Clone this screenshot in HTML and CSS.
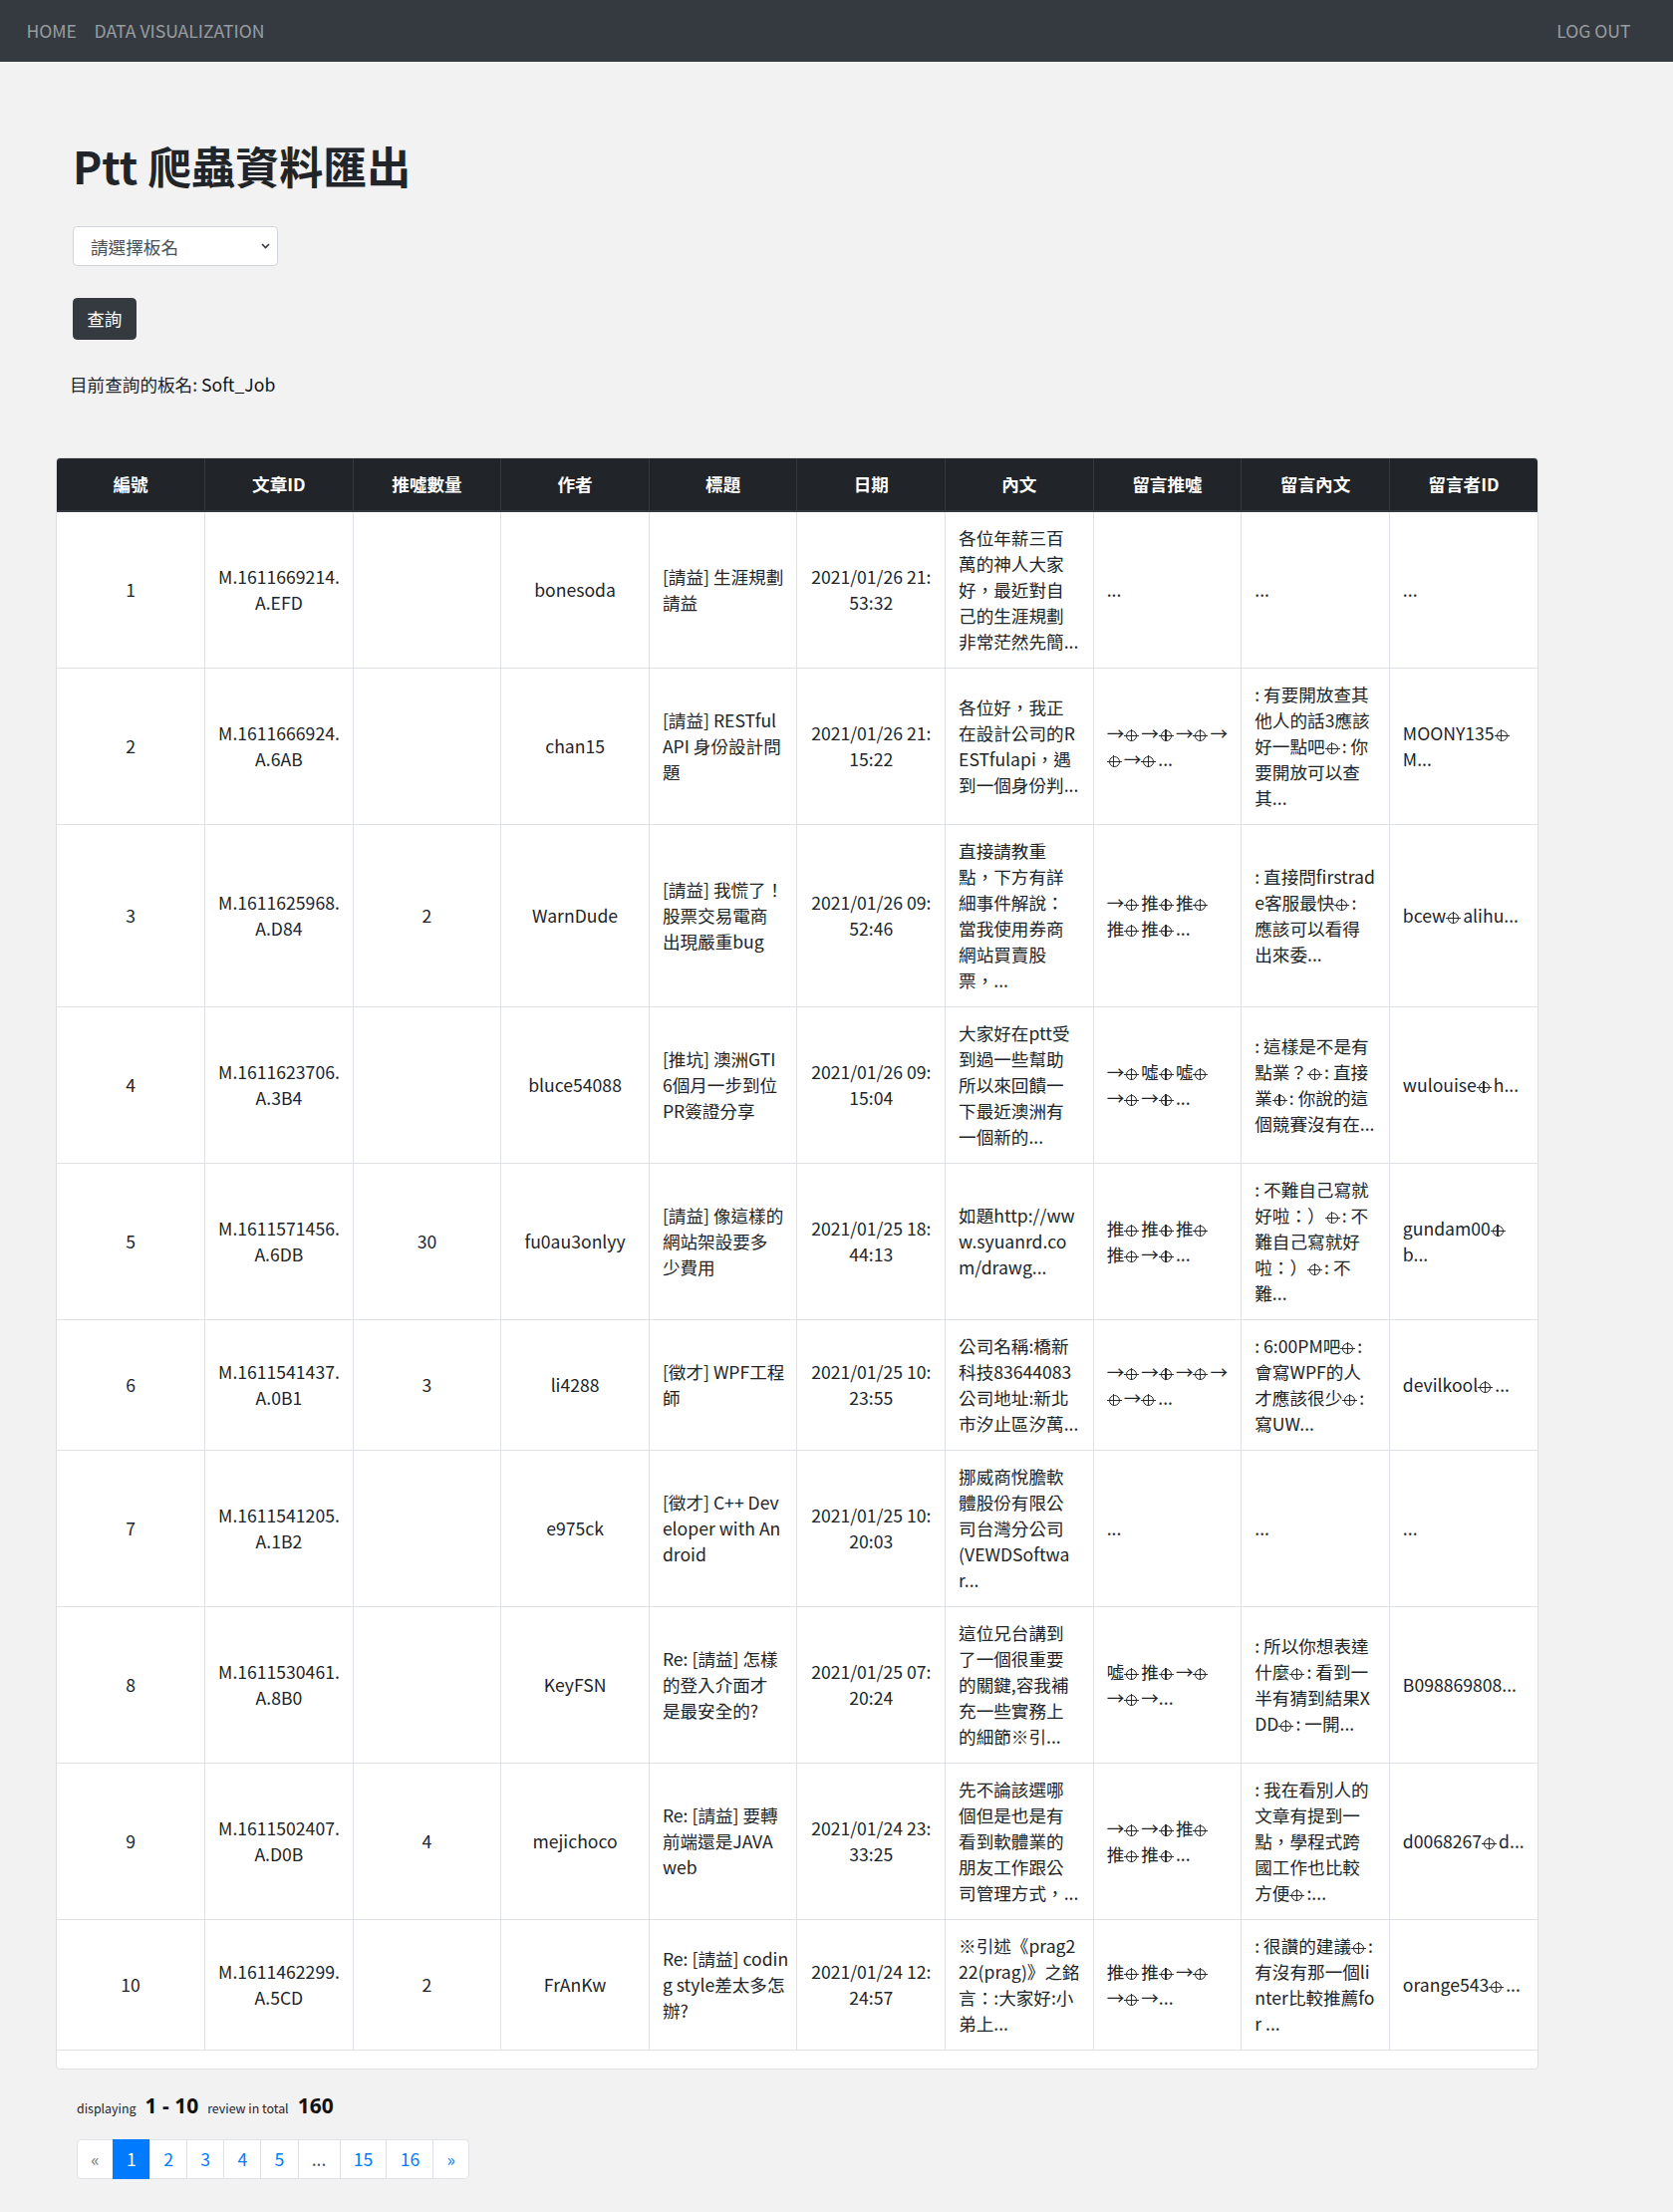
FILE: index.html
```html
<!DOCTYPE html>
<html lang="zh-Hant">
<head>
<meta charset="utf-8">
<title>Ptt 爬蟲資料匯出</title>
<link rel="stylesheet" href="styles.css">
</head>
<body>
<nav class="navbar">
  <div class="nav-left">
    <a class="nav-link" href="#">HOME</a>
    <a class="nav-link" href="#">DATA VISUALIZATION</a>
  </div>
  <div class="nav-right">
    <a class="nav-link" href="#">LOG OUT</a>
  </div>
</nav>

<main class="page">
  <section class="intro">
    <h1 class="title">Ptt 爬蟲資料匯出</h1>
    <div class="select-wrap">
      <select class="board-select">
        <option>請選擇板名</option>
      </select>
      <svg class="chev" width="9" height="6" viewBox="0 0 9 6"><polyline points="1,1 4.5,4.5 8,1" fill="none" stroke="#343a40" stroke-width="1.6"/></svg>
    </div>
    <button class="btn-query" type="button">查詢</button>
    <p class="current">目前查詢的板名: <span class="board">Soft_Job</span></p>
  </section>

  <div class="card">
    <table class="data-table">
      <thead>
        <tr>
          <th>編號</th><th>文章ID</th><th>推噓數量</th><th>作者</th><th>標題</th><th>日期</th><th>內文</th><th>留言推噓</th><th>留言內文</th><th>留言者ID</th>
        </tr>
      </thead>
      <tbody>
        <tr>
          <td class="c">1</td>
          <td class="c">M.1611669214.<br>A.EFD</td>
          <td class="c"></td>
          <td class="c">bonesoda</td>
          <td>[請益] 生涯規劃<br>請益</td>
          <td class="c">2021/01/26 21:<br>53:32</td>
          <td>各位年薪三百<br>萬的神人大家<br>好，最近對自<br>己的生涯規劃<br>非常茫然先簡...</td>
          <td>...</td>
          <td>...</td>
          <td>...</td>
        </tr>
        <tr>
          <td class="c">2</td>
          <td class="c">M.1611666924.<br>A.6AB</td>
          <td class="c"></td>
          <td class="c">chan15</td>
          <td>[請益] RESTful<br>API 身份設計問<br>題</td>
          <td class="c">2021/01/26 21:<br>15:22</td>
          <td>各位好，我正<br>在設計公司的R<br>ESTfulapi，遇<br>到一個身份判...</td>
          <td>→<span class="g"></span>→<span class="g"></span>→<span class="g"></span>→<br><span class="g"></span>→<span class="g"></span>...</td>
          <td>: 有要開放查其<br>他人的話3應該<br>好一點吧<span class="g"></span>: 你<br>要開放可以查<br>其...</td>
          <td>MOONY135<span class="g"></span><br>M...</td>
        </tr>
        <tr>
          <td class="c">3</td>
          <td class="c">M.1611625968.<br>A.D84</td>
          <td class="c">2</td>
          <td class="c">WarnDude</td>
          <td>[請益] 我慌了！<br>股票交易電商<br>出現嚴重bug</td>
          <td class="c">2021/01/26 09:<br>52:46</td>
          <td>直接請教重<br>點，下方有詳<br>細事件解說：<br>當我使用券商<br>網站買賣股<br>票，...</td>
          <td>→<span class="g"></span>推<span class="g"></span>推<span class="g"></span><br>推<span class="g"></span>推<span class="g"></span>...</td>
          <td>: 直接問firstrad<br>e客服最快<span class="g"></span>:<br>應該可以看得<br>出來委...</td>
          <td>bcew<span class="g"></span>alihu...</td>
        </tr>
        <tr>
          <td class="c">4</td>
          <td class="c">M.1611623706.<br>A.3B4</td>
          <td class="c"></td>
          <td class="c">bluce54088</td>
          <td>[推坑] 澳洲GTI<br>6個月一步到位<br>PR簽證分享</td>
          <td class="c">2021/01/26 09:<br>15:04</td>
          <td>大家好在ptt受<br>到過一些幫助<br>所以來回饋一<br>下最近澳洲有<br>一個新的...</td>
          <td>→<span class="g"></span>噓<span class="g"></span>噓<span class="g"></span><br>→<span class="g"></span>→<span class="g"></span>...</td>
          <td>: 這樣是不是有<br>點業？<span class="g"></span>: 直接<br>業<span class="g"></span>: 你說的這<br>個競賽沒有在...</td>
          <td>wulouise<span class="g"></span>h...</td>
        </tr>
        <tr>
          <td class="c">5</td>
          <td class="c">M.1611571456.<br>A.6DB</td>
          <td class="c">30</td>
          <td class="c">fu0au3onlyy</td>
          <td>[請益] 像這樣的<br>網站架設要多<br>少費用</td>
          <td class="c">2021/01/25 18:<br>44:13</td>
          <td>如題http://ww<br>w.syuanrd.co<br>m/drawg...</td>
          <td>推<span class="g"></span>推<span class="g"></span>推<span class="g"></span><br>推<span class="g"></span>→<span class="g"></span>...</td>
          <td>: 不難自己寫就<br>好啦：）<span class="g"></span>: 不<br>難自己寫就好<br>啦：）<span class="g"></span>: 不<br>難...</td>
          <td>gundam00<span class="g"></span><br>b...</td>
        </tr>
        <tr>
          <td class="c">6</td>
          <td class="c">M.1611541437.<br>A.0B1</td>
          <td class="c">3</td>
          <td class="c">li4288</td>
          <td>[徵才] WPF工程<br>師</td>
          <td class="c">2021/01/25 10:<br>23:55</td>
          <td>公司名稱:橋新<br>科技83644083<br>公司地址:新北<br>市汐止區汐萬...</td>
          <td>→<span class="g"></span>→<span class="g"></span>→<span class="g"></span>→<br><span class="g"></span>→<span class="g"></span>...</td>
          <td>: 6:00PM吧<span class="g"></span>:<br>會寫WPF的人<br>才應該很少<span class="g"></span>:<br>寫UW...</td>
          <td>devilkool<span class="g"></span>...</td>
        </tr>
        <tr>
          <td class="c">7</td>
          <td class="c">M.1611541205.<br>A.1B2</td>
          <td class="c"></td>
          <td class="c">e975ck</td>
          <td>[徵才] C++ Dev<br>eloper with An<br>droid</td>
          <td class="c">2021/01/25 10:<br>20:03</td>
          <td>挪威商悅膽軟<br>體股份有限公<br>司台灣分公司<br>(VEWDSoftwa<br>r...</td>
          <td>...</td>
          <td>...</td>
          <td>...</td>
        </tr>
        <tr>
          <td class="c">8</td>
          <td class="c">M.1611530461.<br>A.8B0</td>
          <td class="c"></td>
          <td class="c">KeyFSN</td>
          <td>Re: [請益] 怎樣<br>的登入介面才<br>是最安全的?</td>
          <td class="c">2021/01/25 07:<br>20:24</td>
          <td>這位兄台講到<br>了一個很重要<br>的關鍵,容我補<br>充一些實務上<br>的細節※引...</td>
          <td>噓<span class="g"></span>推<span class="g"></span>→<span class="g"></span><br>→<span class="g"></span>→...</td>
          <td>: 所以你想表達<br>什麼<span class="g"></span>: 看到一<br>半有猜到結果X<br>DD<span class="g"></span>: 一開...</td>
          <td>B098869808...</td>
        </tr>
        <tr>
          <td class="c">9</td>
          <td class="c">M.1611502407.<br>A.D0B</td>
          <td class="c">4</td>
          <td class="c">mejichoco</td>
          <td>Re: [請益] 要轉<br>前端還是JAVA<br>web</td>
          <td class="c">2021/01/24 23:<br>33:25</td>
          <td>先不論該選哪<br>個但是也是有<br>看到軟體業的<br>朋友工作跟公<br>司管理方式，...</td>
          <td>→<span class="g"></span>→<span class="g"></span>推<span class="g"></span><br>推<span class="g"></span>推<span class="g"></span>...</td>
          <td>: 我在看別人的<br>文章有提到一<br>點，學程式跨<br>國工作也比較<br>方便<span class="g"></span>:...</td>
          <td>d0068267<span class="g"></span>d...</td>
        </tr>
        <tr>
          <td class="c">10</td>
          <td class="c">M.1611462299.<br>A.5CD</td>
          <td class="c">2</td>
          <td class="c">FrAnKw</td>
          <td>Re: [請益] codin<br>g style差太多怎<br>辦?</td>
          <td class="c">2021/01/24 12:<br>24:57</td>
          <td>※引述《prag2<br>22(prag)》之銘<br>言：:大家好:小<br>弟上...</td>
          <td>推<span class="g"></span>推<span class="g"></span>→<span class="g"></span><br>→<span class="g"></span>→...</td>
          <td>: 很讚的建議<span class="g"></span>:<br>有沒有那一個li<br>nter比較推薦fo<br>r ...</td>
          <td>orange543<span class="g"></span>...</td>
        </tr>
      </tbody>
    </table>
  </div>

  <div class="summary">
    <span class="small">displaying</span>
    <strong class="big">1 - 10</strong>
    <span class="small">review in total</span>
    <strong class="big">160</strong>
  </div>

  <ul class="pagination">
    <li class="page-item disabled"><a class="page-link" href="#">«</a></li>
    <li class="page-item active"><a class="page-link" href="#">1</a></li>
    <li class="page-item"><a class="page-link" href="#">2</a></li>
    <li class="page-item"><a class="page-link" href="#">3</a></li>
    <li class="page-item"><a class="page-link" href="#">4</a></li>
    <li class="page-item"><a class="page-link" href="#">5</a></li>
    <li class="page-item dots"><a class="page-link" href="#">...</a></li>
    <li class="page-item"><a class="page-link" href="#">15</a></li>
    <li class="page-item"><a class="page-link" href="#">16</a></li>
    <li class="page-item"><a class="page-link" href="#">»</a></li>
  </ul>
</main>
</body>
</html>
```

FILE: styles.css
```css
html {
  font-size: 17.6px;
}

body {
  margin: 0;
  background: #f2f2f2;
  color: #212529;
  font-family: "Noto Sans CJK TC", "Noto Sans", sans-serif;
  font-size: 1rem;
  line-height: 1.5;
}

/* Navbar */
.navbar {
  height: 61.6px;
  background: #343a40;
  display: flex;
  align-items: center;
  justify-content: space-between;
  padding: 0 17.6px;
}

.nav-left,
.nav-right {
  display: flex;
  align-items: center;
}

.nav-right {
  margin-right: 16px;
}

.nav-link {
  color: rgba(255, 255, 255, 0.5);
  text-decoration: none;
  padding: 0 8.8px;
  line-height: 26.4px;
}

/* Page */
.page {
  width: 1488px;
  margin-left: 56px;
}

.intro {
  padding: 78px 0 0 17px;
}

.title {
  margin: 0 0 35px;
  font-size: 44px;
  font-weight: 700;
  line-height: 1.2;
  color: #212529;
}

.select-wrap {
  position: relative;
  width: 206px;
  height: 40px;
  margin-bottom: 32px;
}

.board-select {
  appearance: none;
  -webkit-appearance: none;
  width: 100%;
  height: 100%;
  box-sizing: border-box;
  border: 1px solid #ced4da;
  border-radius: 4.4px;
  background: #fff;
  color: #495057;
  font-family: inherit;
  font-size: 17.6px;
  padding: 0 30px 0 17px;
}

.chev {
  position: absolute;
  right: 8px;
  top: 17px;
}

.btn-query {
  display: block;
  height: 41.6px;
  padding: 0 13.2px;
  border: 1px solid #343a40;
  border-radius: 4.4px;
  background: #343a40;
  color: #fff;
  font-family: inherit;
  font-size: 17.6px;
  line-height: 26.4px;
  margin-bottom: 32.4px;
}

.current {
  margin: 0 0 59.6px -3px;
  line-height: 26.4px;
}

.board {
  color: #111;
}

/* Table card */
.card {
  background: #fff;
  border: 1px solid rgba(0, 0, 0, 0.125);
  border-radius: 4.4px;
  padding-bottom: 18px;
  overflow: hidden;
}

.data-table {
  width: 100%;
  table-layout: fixed;
  border-collapse: collapse;
}

.data-table th {
  background: #212529;
  color: #fff;
  font-weight: 700;
  text-align: center;
  padding: 13px;
  line-height: 26px;
  border: 1px solid #32383e;
  border-bottom-width: 2px;
}

.data-table td {
  padding: 13px;
  line-height: 26px;
  border: 1px solid #dee2e6;
  vertical-align: middle;
  text-align: left;
  white-space: nowrap;
  overflow: hidden;
}

.data-table tr > :first-child {
  border-left: 0;
}

.data-table tr > :last-child {
  border-right: 0;
}

.data-table thead th {
  border-top: 0;
}

.data-table td.c {
  text-align: center;
}

/* glyph shown for an unprintable control character */
.g {
  display: inline-block;
  position: relative;
  box-sizing: border-box;
  width: 11px;
  height: 11px;
  border: 1.3px solid #2b2b2b;
  border-radius: 50%;
  margin: 0 4px 0 2px;
  vertical-align: -1px;
}

.g::before {
  content: "";
  position: absolute;
  left: 3.5px;
  top: -2px;
  width: 1.3px;
  height: 12px;
  background: #2b2b2b;
}

.g::after {
  content: "";
  position: absolute;
  left: -3px;
  top: 3.5px;
  width: 15px;
  height: 1.3px;
  background: #2b2b2b;
}

/* Summary */
.summary {
  margin: 21px 0 0 21px;
  display: flex;
  align-items: baseline;
  gap: 9px;
  height: 32px;
}

.summary .small {
  font-size: 12.4px;
}

.summary .big {
  font-size: 21px;
  font-weight: 700;
  font-family: "Noto Sans", sans-serif;
  color: #111;
}

/* Pagination */
.pagination {
  list-style: none;
  margin: 17px 0 0 21px;
  padding: 0;
  display: flex;
}

.page-link {
  display: block;
  padding: 7.6px 13.2px;
  line-height: 22px;
  border: 1px solid #dee2e6;
  margin-left: -1px;
  background: #fff;
  color: #007bff;
  text-decoration: none;
}

.page-item:first-child .page-link {
  margin-left: 0;
  border-radius: 4.4px 0 0 4.4px;
}

.page-item:last-child .page-link {
  border-radius: 0 4.4px 4.4px 0;
}

.page-item.active .page-link {
  background: #007bff;
  border-color: #007bff;
  color: #fff;
}

.page-item.disabled .page-link {
  color: #6c757d;
}

.page-item.dots .page-link {
  color: #495057;
}
```
